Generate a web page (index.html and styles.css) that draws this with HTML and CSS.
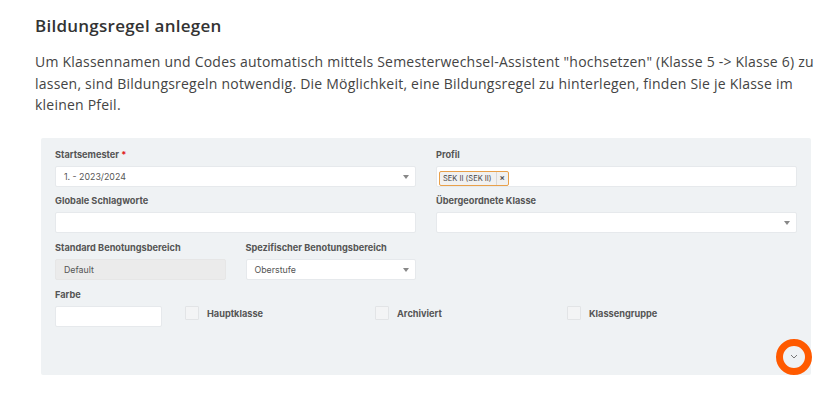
FILE: index.html
```html
<!DOCTYPE html>
<html lang="de">
<head>
<meta charset="utf-8">
<link rel="stylesheet" href="styles.css">
</head>
<body>
<div class="page">
  <h2 class="title">Bildungsregel anlegen</h2>
  <p class="intro">Um Klassennamen und Codes automatisch mittels Semesterwechsel-Assistent "hochsetzen" (Klasse 5 -&gt; Klasse 6) zu lassen, sind Bildungsregeln notwendig. Die Möglichkeit, eine Bildungsregel zu hinterlegen, finden Sie je Klasse im kleinen Pfeil.</p>
  <div class="panel">
    <div class="grid">
      <div class="field span2">
        <label class="lbl">Startsemester <span class="req">*</span></label>
        <div class="input select">1. - 2023/2024<span class="caret"></span></div>
      </div>
      <div class="field span2">
        <label class="lbl">Profil</label>
        <div class="input tags"><span class="tag"><span class="tag-text">SEK II (SEK II)</span><span class="tag-x">×</span></span></div>
      </div>
      <div class="field span2">
        <label class="lbl">Globale Schlagworte</label>
        <div class="input"></div>
      </div>
      <div class="field span2">
        <label class="lbl">Übergeordnete Klasse</label>
        <div class="input select"><span class="caret"></span></div>
      </div>
      <div class="field">
        <label class="lbl">Standard Benotungsbereich</label>
        <div class="input disabled">Default</div>
      </div>
      <div class="field">
        <label class="lbl">Spezifischer Benotungsbereich</label>
        <div class="input select">Oberstufe<span class="caret"></span></div>
      </div>
    </div>
    <div class="row4">
      <div class="field">
        <label class="lbl">Farbe</label>
        <div class="input"></div>
      </div>
      <div class="check"><span class="box"></span><span class="check-lbl">Hauptklasse</span></div>
      <div class="check"><span class="box"></span><span class="check-lbl">Archiviert</span></div>
      <div class="check"><span class="box"></span><span class="check-lbl">Klassengruppe</span></div>
    </div>
    <div class="footer">
      <button class="toggle" type="button">
        <svg width="8" height="5" viewBox="0 0 8 5"><path d="M1 1 L4 4 L7 1" fill="none" stroke="#777" stroke-width="1"/></svg>
      </button>
      <span class="ring"></span>
    </div>
  </div>
</div>
</body>
</html>
```
FILE: styles.css
```css
* { box-sizing: border-box; }
html, body { margin: 0; padding: 0; background: #fff; }
body { font-family: "Open Sans", "Liberation Sans", sans-serif; color: #333; }
.page { padding: 14px 0 0 35px; width: 817px; }
.title { margin: 0; font-size: 17px; font-weight: 600; line-height: 24px; color: #333; letter-spacing: 0.25px; }
.intro { margin: 13px 0 0; font-size: 14px; letter-spacing: 0.22px; line-height: 21.5px; color: #444; }
.panel { position: relative; margin: 22px 0 0 6px; width: 770px; height: 237px; background: #eff2f4; border-radius: 2px; padding: 10px 14px 0 14px; }
.grid { display: grid; grid-template-columns: repeat(4, 1fr); column-gap: 20px; row-gap: 7.7px; }
.span2 { grid-column: span 2; }
.field { display: flex; flex-direction: column; }
.lbl { font-family: Inter, "Liberation Sans", sans-serif; font-weight: 700; font-size: 9.2px; line-height: 14px; color: #555; margin-bottom: 4px; }
.req { color: #e02020; }
.input { position: relative; height: 21px; background: #fff; border: 1px solid #e6e9ec; border-radius: 2px; font-family: Inter, "Liberation Sans", sans-serif; font-size: 8.8px; line-height: 19px; color: #555; padding: 0 8px; }
.input.disabled { background: #ebebeb; border-color: #e6e6e6; }
.caret { position: absolute; right: 6px; top: 8px; width: 0; height: 0; border-left: 3px solid transparent; border-right: 3px solid transparent; border-top: 4px solid #888; }
.tags { padding: 1px 2px; }
.tag { display: inline-flex; align-items: center; height: 15px; border: 1px solid #e8a04a; border-radius: 2px; background: #f1f1f1; font-size: 7.5px; line-height: 13px; color: #444; }
.tag-text { padding: 0 4px 0 3px; }
.tag-x { border-left: 1px solid #d8d8d8; padding: 0 3px; font-size: 8px; font-weight: 700; color: #555; }
.row4 { display: grid; grid-template-columns: 107px 167px 169px 1fr; column-gap: 23px; margin-top: 7.7px; align-items: end; }
.check { display: flex; align-items: center; height: 21px; margin-bottom: 3px; }
.box { width: 14px; height: 14px; border: 1px solid #e2e4e6; background: #f3f4f5; margin-right: 8px; border-radius: 1px; }
.check-lbl { font-family: Inter, "Liberation Sans", sans-serif; font-weight: 700; font-size: 9.2px; color: #555; }
.footer { position: absolute; right: 5px; bottom: 6px; }
.toggle { width: 24px; height: 24px; border: none; background: transparent; padding: 0; display: flex; align-items: center; justify-content: center; }
.ring { position: absolute; left: -6px; top: -6px; width: 36px; height: 36px; border: 7px solid #ff5a00; border-radius: 50%; }
```
